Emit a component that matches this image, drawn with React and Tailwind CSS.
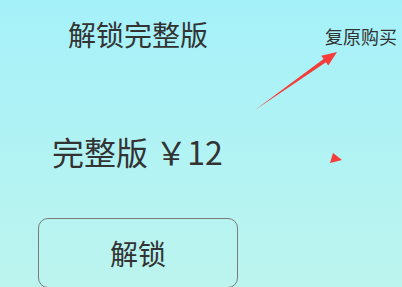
export default function App() {
  return (
    <div
      className="relative h-[287px] w-[402px] overflow-hidden bg-gradient-to-b from-[#a5f1fa] to-[#bcf4ee] text-[#333333]"
      style={{ fontFamily: '"Noto Sans CJK SC", "Noto Sans", sans-serif' }}
    >
      <div className="flex items-start justify-between pt-[20px] pr-[5px]">
        <div className="w-[276px] text-center text-[28px] leading-none">解锁完整版</div>
        <div className="mt-[7px] text-[18px] leading-none">复原购买</div>
      </div>
      <div className="mt-[87px] pl-[52px] text-[32px] leading-none">完整版 ￥12</div>
      <div className="ml-[38px] mt-[51px] flex h-[70px] w-[200px] items-center justify-center rounded-[10px] border border-[#7a7a7a] text-[28px] leading-none">
        解锁
      </div>
      <svg className="pointer-events-none absolute left-0 top-0" width="402" height="287" viewBox="0 0 402 287">
        <polygon
          points="255,110 323.6,59.1 321.3,55.8 337,52 328.3,65.6 325.9,62.3"
          fill="#f63b3b"
        />
        <polygon points="333,153 342,160 330,163" fill="#f63b3b" />
      </svg>
    </div>
  );
}
